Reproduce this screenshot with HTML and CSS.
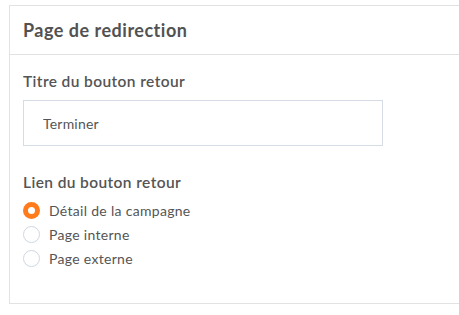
FILE: index.html
```html
<!DOCTYPE html>
<html lang="fr">
<head>
<meta charset="utf-8">
<link rel="stylesheet" href="styles.css">
</head>
<body>
<section class="card">
  <header class="card-header">Page de redirection</header>
  <div class="card-body">
    <div class="field">
      <label class="field-label" for="title">Titre du bouton retour</label>
      <input id="title" class="text-input" type="text" value="Terminer">
    </div>
    <div class="field field-radios">
      <div class="field-label">Lien du bouton retour</div>
      <div class="radio-list">
        <label class="radio-row"><span class="radio radio-checked"></span><span class="radio-text">Détail de la campagne</span></label>
        <label class="radio-row"><span class="radio"></span><span class="radio-text">Page interne</span></label>
        <label class="radio-row"><span class="radio"></span><span class="radio-text">Page externe</span></label>
      </div>
    </div>
  </div>
</section>
</body>
</html>
```

FILE: styles.css
```css
html, body {
  margin: 0;
  padding: 0;
  background: #ffffff;
  overflow: hidden;
}
body {
  font-family: Lato, "Open Sans", sans-serif;
  color: #555555;
}
.card {
  margin: 5px 0 0 9px;
  width: 470px;
  height: 299px;
  box-sizing: border-box;
  border: 1px solid #e2e2e2;
  border-right: none;
  background: #fff;
}
.card-header {
  height: 49px;
  box-sizing: border-box;
  display: flex;
  align-items: center;
  padding: 0 13px;
  border-bottom: 1px solid #e2e2e2;
  font-size: 18px;
  font-weight: 700;
  letter-spacing: 0.5px;
  color: #525252;
}
.card-body {
  padding: 16px 13px 0;
}
.field {
  display: flex;
  flex-direction: column;
}
.field-label {
  font-size: 15.5px;
  font-weight: 600;
  letter-spacing: 0.4px;
  color: #555555;
  line-height: 20px;
  margin-bottom: 9px;
}
.text-input {
  width: 360px;
  height: 46px;
  box-sizing: border-box;
  border: 1px solid #d6dce6;
  border-radius: 0;
  padding: 0 19px;
  font-family: inherit;
  font-size: 14px;
  letter-spacing: 0.2px;
  color: #555555;
  outline: none;
}
.field-radios {
  margin-top: 26px;
}
.field-radios .field-label {
  margin-bottom: 6px;
}
.radio-list {
  display: flex;
  flex-direction: column;
}
.radio-row {
  display: flex;
  align-items: center;
  height: 24px;
  gap: 9px;
}
.radio {
  width: 17px;
  height: 17px;
  box-sizing: border-box;
  border: 1px solid #cfd6e1;
  border-radius: 50%;
  background: #fff;
}
.radio-checked {
  border: 5px solid #ff7b1c;
  background: #fff;
}
.radio-text {
  font-size: 14px;
  letter-spacing: 0.3px;
  color: #555555;
}
```
